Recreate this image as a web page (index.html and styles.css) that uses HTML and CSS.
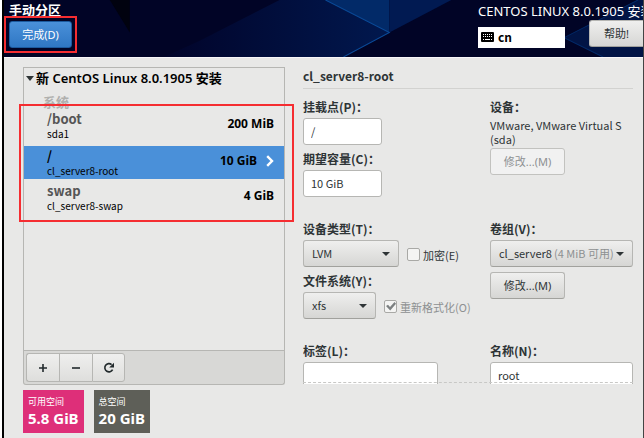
FILE: index.html
```html
<!DOCTYPE html>
<html lang="zh-CN">
<head>
    <meta charset="UTF-8">
    <meta name="viewport" content="width=device-width, initial-scale=1">
    <title>手动分区</title>
    <link rel="stylesheet" href="styles.css">
</head>
<body>

    <div class="installer">

        <header class="topbar">
            <svg class="topbar-bg" viewBox="0 0 640 56" preserveAspectRatio="none" aria-hidden="true">
                <defs>
                    <linearGradient id="glow" x1="0" x2="1" y1="0" y2="0">
                        <stop offset="0" stop-color="#01042a"/>
                        <stop offset="1" stop-color="#01184e"/>
                    </linearGradient>
                </defs>
                <rect width="640" height="56" fill="#010426"/>
                <polygon points="106,0 126,0 126,32" fill="#01020f"/>
                <polygon points="196,40 276,0 322,0 386,32 340,56 160,56" fill="url(#glow)"/>
                <polygon points="322,0 386,0 386,32" fill="#022a68"/>
                <polygon points="386,0 448,0 386,32" fill="#011a52"/>
                <polygon points="561,37 635,0 640,0 640,56 600,56" fill="#011445"/>
                <path d="M322 0L386 32L340 56" fill="none" stroke="#0a4a98"/>
                <path d="M635 0L561 37L600 56" fill="none" stroke="#022a68"/>
            </svg>

            <div class="topbar-left">
                <h1 class="title">手动分区</h1>
                <div class="marked">
                    <button class="btn btn-done">完成(D)</button>
                </div>
            </div>

            <div class="topbar-right">
                <p class="product">CENTOS LINUX 8.0.1905 安装</p>
                <div class="topbar-tools">
                    <button class="keyboard">
                        <svg width="13" height="10" viewBox="0 0 13 10" aria-hidden="true">
                            <rect width="13" height="10" rx="1" fill="#000"/>
                            <path d="M2 2.5h9M2 4.5h9" stroke="#fff" stroke-dasharray="1 1"/>
                            <path d="M2 7.5h1M4 7.5h5M10 7.5h1" stroke="#fff"/>
                        </svg>
                        cn
                    </button>
                    <button class="btn btn-help">帮助!</button>
                </div>
            </div>
        </header>

        <main>

            <section class="sidebar">
                <div class="list">
                    <h2 class="list-title">新 CentOS Linux 8.0.1905 安装</h2>
                    <p class="group">系统</p>
                    <ul class="partitions">
                        <li class="partition">
                            <div>
                                <p class="mount">/boot</p>
                                <p class="device">sda1</p>
                            </div>
                            <p class="size">200 MiB</p>
                        </li>
                        <li class="partition selected">
                            <div>
                                <p class="mount">/</p>
                                <p class="device">cl_server8-root</p>
                            </div>
                            <p class="size">10 GiB</p>
                            <svg class="chevron" width="8" height="12" viewBox="0 0 8 12" aria-hidden="true">
                                <path d="M1.2 1.2L6 6L1.2 10.8" fill="none" stroke="#fff" stroke-width="2.4"/>
                            </svg>
                        </li>
                        <li class="partition">
                            <div>
                                <p class="mount">swap</p>
                                <p class="device">cl_server8-swap</p>
                            </div>
                            <p class="size">4 GiB</p>
                        </li>
                    </ul>
                </div>

                <div class="toolbar">
                    <button class="tool" aria-label="添加">
                        <svg width="10" height="10" viewBox="0 0 10 10"><path d="M5 1v8M1 5h8" stroke="#222a2c" stroke-width="1.6"/></svg>
                    </button>
                    <button class="tool" aria-label="删除">
                        <svg width="10" height="10" viewBox="0 0 10 10"><path d="M1 5h8" stroke="#222a2c" stroke-width="1.6"/></svg>
                    </button>
                    <button class="tool" aria-label="刷新">
                        <svg width="12" height="12" viewBox="0 0 12 12">
                            <path d="M8.6 2.6A4.1 4.1 0 1 0 9.6 7.6" fill="none" stroke="#222a2c" stroke-width="1.6"/>
                            <path d="M11 .8V5.6H6.2z" fill="#222a2c"/>
                        </svg>
                    </button>
                </div>

                <div class="totals">
                    <div class="total free">
                        <p>可用空间</p>
                        <b>5.8 GiB</b>
                    </div>
                    <div class="total">
                        <p>总空间</p>
                        <b>20 GiB</b>
                    </div>
                </div>
            </section>

            <form class="details">
                <h2 class="details-title">cl_server8-root</h2>

                <div class="fields">
                    <div class="field">
                        <label for="mount">挂载点(P)：</label>
                        <input class="short" type="text" id="mount" value="/">
                        <label for="capacity">期望容量(C)：</label>
                        <input class="short" type="text" id="capacity" value="10 GiB">
                    </div>
                    <div class="field">
                        <h3>设备：</h3>
                        <p class="disk">VMware, VMware Virtual S (sda)</p>
                        <button type="button" class="btn btn-modify" disabled>修改...(M)</button>
                    </div>

                    <div class="field">
                        <label for="type">设备类型(T)：</label>
                        <div class="line">
                            <div class="dropdown type">
                                <select id="type"><option>LVM</option></select>
                            </div>
                            <input type="checkbox" id="encrypt">
                            <label class="tick" for="encrypt">加密(E)</label>
                        </div>
                        <label for="fs">文件系统(Y)：</label>
                        <div class="line">
                            <div class="dropdown fs">
                                <select id="fs"><option>xfs</option></select>
                            </div>
                            <input type="checkbox" id="reformat" checked disabled>
                            <label class="tick" for="reformat">重新格式化(O)</label>
                        </div>
                    </div>
                    <div class="field">
                        <label for="group">卷组(V)：</label>
                        <div class="dropdown">
                            <select id="group"><option>cl_server8</option></select>
                            <span class="available">(4 MiB 可用)</span>
                        </div>
                        <button type="button" class="btn btn-modify">修改...(M)</button>
                    </div>

                    <div class="field">
                        <label for="label">标签(L)：</label>
                        <input type="text" id="label">
                    </div>
                    <div class="field">
                        <label for="name">名称(N)：</label>
                        <input type="text" id="name" value="root">
                    </div>
                </div>
            </form>

        </main>

        <div class="mark-list"></div>
    </div>

</body>
</html>
```
FILE: styles.css
```css
* {
    box-sizing: border-box;
    margin: 0;
    padding: 0;
}
body {
    padding-left: 2px;
    background-color: white;
    color: #2e3436;
    font-family: "Noto Sans CJK SC", sans-serif;
    font-size: 12px;
    line-height: 16px;
}
button, input, select {
    font: inherit;
    color: inherit;
}
.installer {
    position: relative;
    height: 100vh;
    overflow: hidden;
    border-left: 2px solid black;
    border-right: 1px solid #444444;
    background-color: #e8e8e7;
}

/* Header */
.topbar {
    position: relative;
    display: flex;
    justify-content: space-between;
    height: 58px;
    padding: 2px 0 0 5px;
    border-bottom: 1px solid #f8f6f8;
    color: white;
}
.topbar-bg {
    position: absolute;
    top: 0;
    left: 0;
    width: 100%;
    height: 100%;
}
.topbar-left, .topbar-right {
    position: relative;
}
.topbar-right {
    width: 165px;
}
.title {
    font-size: 13px;
    font-weight: bold;
    line-height: 16px;
    margin-bottom: 3px;
}
.product {
    font-family: "Noto Sans", "Noto Sans CJK SC", sans-serif;
    font-size: 13px;
    line-height: 18px;
    white-space: nowrap;
}
.topbar-tools {
    display: flex;
    justify-content: space-between;
}
.btn {
    height: 27px;
    border: 1px solid #b6b6b3;
    border-bottom-color: #a1a19d;
    border-radius: 3px;
    background: linear-gradient(#efefee, #d6d6d4);
    color: #2e3436;
    font-family: "Noto Sans", "Noto Sans CJK SC", sans-serif;
    font-size: 11px;
}
.btn:disabled {
    border-color: #c2c2bf;
    background: #f1f1f1;
    color: #8d9091;
}
.btn-done {
    width: 63px;
    border-color: #1c5a9e;
    background: linear-gradient(#4a90d9, #2f77c4);
    color: white;
}
.marked {
    position: relative;
}
.marked::after {
    content: "";
    position: absolute;
    inset: -5px;
    border: 2px solid #f52d31;
    pointer-events: none;
}
.keyboard {
    display: flex;
    align-items: center;
    gap: 4px;
    width: 87px;
    height: 21px;
    margin-top: 7px;
    padding: 0 0 2px 3px;
    border: none;
    background-color: white;
    color: black;
    font-weight: bold;
}
.btn-help {
    width: 54px;
    border-right: none;
    border-radius: 3px 0 0 3px;
}

main {
    display: flex;
    gap: 18px;
    padding: 9px 10px 0 19px;
}

/* Partition list */
.sidebar {
    width: 262px;
    font-family: "Noto Sans", "Noto Sans CJK SC", sans-serif;
}
.list {
    height: 284px;
    border: 1px solid #b6b6b3;
}
.list-title {
    display: flex;
    align-items: center;
    gap: 2px;
    padding: 1px 0 0 2px;
    color: black;
    font-size: 13px;
    font-weight: 600;
    line-height: 18px;
    white-space: nowrap;
}
.list-title::before {
    content: "";
    border: 4px solid transparent;
    border-top: 5px solid #2e3436;
    border-bottom: none;
}
.group {
    height: 19px;
    padding: 7px 0 0 19px;
    color: #b0b0ae;
    font-size: 13px;
    font-weight: bold;
}
.partitions {
    list-style: none;
}
.partition {
    display: flex;
    align-items: center;
    height: 38px;
    padding: 0 10px 0 23px;
    color: black;
}
.partition:first-child {
    height: 40px;
}
.partition.selected {
    height: 33px;
    background-color: #4a90d9;
}
.partition > div {
    flex: 1;
    font-family: "Noto Sans CJK SC", sans-serif;
}
.mount {
    color: #555555;
    font-size: 13px;
    font-weight: bold;
}
.selected .mount {
    color: black;
}
.device {
    font-size: 10px;
    line-height: 14px;
}
.size {
    margin-bottom: 4px;
    font-size: 12px;
    font-weight: bold;
}
.chevron {
    margin: 0 0 4px 9px;
}
.toolbar {
    display: flex;
    height: 34px;
    padding: 2px;
    border: 1px solid #b6b6b3;
    border-top: none;
    border-radius: 0 0 3px 3px;
    background-color: #d8d8d6;
}
.tool {
    display: flex;
    align-items: center;
    justify-content: center;
    width: 33px;
    height: 29px;
    border: 1px solid #b6b6b3;
    border-right: none;
    background: linear-gradient(#efefee, #dededc);
}
.tool:first-child {
    border-radius: 3px 0 0 3px;
}
.tool:last-child {
    border-right: 1px solid #b6b6b3;
    border-radius: 0 3px 3px 0;
}
.totals {
    display: flex;
    gap: 10px;
    margin-top: 5px;
}
.total {
    height: 43px;
    padding: 4px 5px;
    background-color: #5e5f58;
    color: white;
    white-space: nowrap;
}
.free {
    background-color: #de2f79;
}
.total p {
    font-size: 9px;
}
.total b {
    display: block;
    font-size: 15px;
}

/* Details of the selected partition */
.details {
    flex: 1;
    height: 317px;
    overflow: hidden;
    position: relative;
    font-size: 11px;
}
.details::after {
    content: "";
    position: absolute;
    left: 0;
    right: 0;
    bottom: 1px;
    border-bottom: 1px dashed #c8c8c6;
}
.details-title {
    padding-bottom: 4px;
    border-bottom: 1px solid #d2d2d0;
    font-size: 12px;
    line-height: 17px;
}
.fields {
    display: grid;
    grid-template-columns: 135px 1fr;
    gap: 24px 52px;
    padding-top: 10px;
}
.field > label, h3 {
    display: block;
    margin-bottom: 3px;
    font-size: 12px;
    font-weight: bold;
    white-space: nowrap;
}
input[type="text"] {
    display: block;
    width: 100%;
    height: 27px;
    padding: 0 7px 2px;
    border: 1px solid #b6b6b3;
    border-radius: 3px;
    background-color: white;
}
.field > input + label, .line + label {
    margin-top: 6px;
}
input.short {
    width: 79px;
}
.disk {
    line-height: 14px;
}
.btn-modify {
    display: block;
    width: 75px;
    margin-top: 2px;
}
.dropdown + .btn-modify {
    margin-top: 5px;
}
.line {
    display: flex;
    align-items: center;
    white-space: nowrap;
}
.dropdown {
    position: relative;
    flex-shrink: 0;
}
.dropdown select {
    appearance: none;
    display: block;
    width: 100%;
    height: 27px;
    padding: 0 8px 1px;
    border: 1px solid #b6b6b3;
    border-bottom-color: #a1a19d;
    border-radius: 3px;
    background: linear-gradient(#efefee, #d6d6d4);
}
.dropdown::after {
    content: "";
    position: absolute;
    right: 9px;
    top: 12px;
    border: 4px solid transparent;
    border-top-color: #2e3436;
    border-bottom: none;
    pointer-events: none;
}
.available {
    position: absolute;
    left: 64px;
    top: 5px;
    color: #8d9091;
    white-space: nowrap;
    pointer-events: none;
}
.type {
    width: 96px;
}
.fs {
    width: 73px;
}
input[type="checkbox"] {
    flex-shrink: 0;
    appearance: none;
    width: 13px;
    height: 13px;
    margin: 2px 3px 0 8px;
    border: 1px solid #a9a9a6;
    border-radius: 2px;
    background-color: #f4f4f3;
}
input[type="checkbox"]:checked::before {
    content: "";
    display: block;
    width: 10px;
    height: 9px;
    margin: 1px;
    background-color: #7c8081;
    clip-path: polygon(0 45%, 20% 30%, 40% 55%, 85% 0, 100% 20%, 42% 95%);
}
.tick {
    margin-top: 3px;
}
input:disabled + .tick {
    color: #8d9091;
}

/* Red frame round the partitions */
.mark-list {
    position: absolute;
    left: 15px;
    top: 104px;
    width: 275px;
    height: 118px;
    border: 2px solid #f52d31;
}
```
